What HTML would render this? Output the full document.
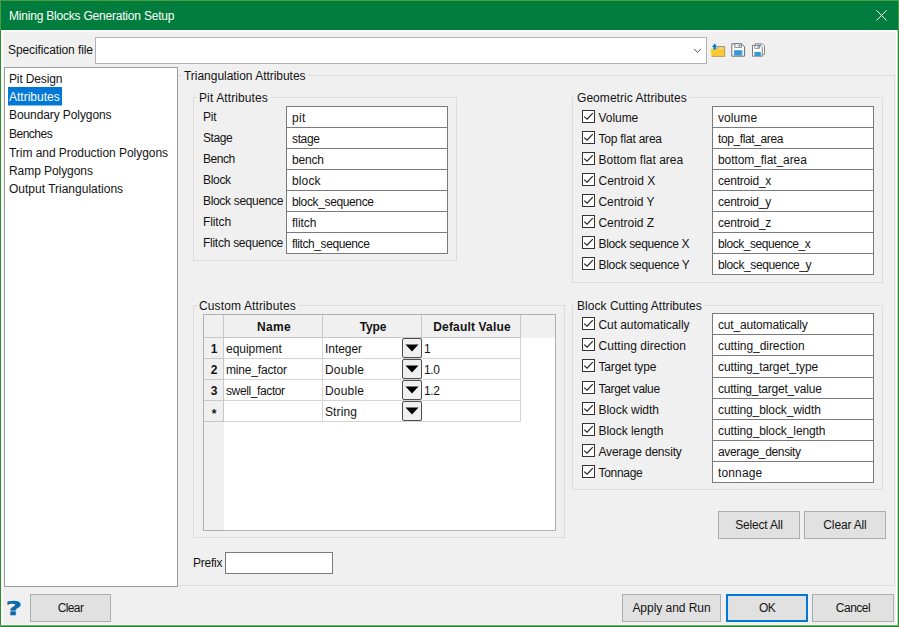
<!DOCTYPE html><html><head><meta charset="utf-8"><title>Mining Blocks Generation Setup</title><style>
*{box-sizing:border-box;margin:0;padding:0}
html,body{width:899px;height:627px;overflow:hidden;background:#f0f0f0}
body{font-family:"Liberation Sans",sans-serif;font-size:12px;color:#141414;position:relative}
.a{position:absolute}
.t{position:absolute;white-space:nowrap;line-height:16px;height:16px}
.gb{position:absolute;border:1px solid #dcdcdc}
.gl{position:absolute;white-space:nowrap;line-height:16px;height:16px;background:#f0f0f0;padding:0 2px}
.in{position:absolute;border:1px solid #7a7a7a;background:#fff;height:22px;width:162px;line-height:22px;padding-left:5px;white-space:nowrap}
.cb{position:absolute;width:13px;height:13px;border:1px solid #333;background:#fff}
.cb svg{position:absolute;left:0;top:0}
.btn{position:absolute;border:1px solid #adadad;background:#e1e1e1;text-align:center;line-height:27px;height:28px;white-space:nowrap}
.li{position:absolute;left:8px;white-space:nowrap;line-height:18px;height:18px;padding:0 1px}
.hc{position:absolute;background:#f0f0f0;border-right:1px solid #c8c8c8;border-bottom:1px solid #c8c8c8;font-weight:bold;text-align:center;white-space:nowrap}
.c{position:absolute;background:#fff;border-right:1px solid #d4d4d4;border-bottom:1px solid #d4d4d4;white-space:nowrap;line-height:22px;padding-left:2px}
.dd{position:absolute;width:20px;height:20px;border:1px solid #4d4d4d;border-radius:2px;background:#f0f0f0}
</style></head><body>
<div class="a" style="left:0;top:0;width:899px;height:30px;background:#007c3c"></div>
<div class="a" style="left:0;top:0;width:899px;height:1px;background:#4a9e3f"></div>
<div class="a" style="left:0;top:0;width:1px;height:30px;background:#4a9e3f"></div>
<div class="a" style="left:898px;top:0;width:1px;height:30px;background:#4a9e3f"></div>
<div class="a" style="left:0;top:30px;width:1px;height:597px;background:#2d8c2d"></div>
<div class="a" style="left:898px;top:30px;width:1px;height:597px;background:#2d8c2d"></div>
<div class="a" style="left:0;top:625px;width:899px;height:2px;background:#2d8c2d"></div>
<div class="a" style="left:1px;top:30px;width:897px;height:2px;background:#fdfafc"></div>
<div class="a" style="left:1px;top:30px;width:2px;height:595px;background:#fdfafc"></div>
<div class="a" style="left:896px;top:30px;width:2px;height:595px;background:#fdfafc"></div>
<div class="a" style="left:1px;top:624px;width:897px;height:1px;background:#fdfafc"></div>
<div class="a" style="left:897px;top:30px;width:1px;height:595px;background:#bfd9be"></div>
<div class="a" style="left:0;top:625px;width:899px;height:1px;background:#6bad6b"></div>
<div class="t" style="left:9px;top:8px;color:#fff"><span style="letter-spacing:-0.207px">Mining Blocks Generation Setup</span></div>
<svg class="a" style="left:876px;top:10px" width="12" height="12" viewBox="0 0 12 12"><path d="M0.4 0.3L10.6 10.5M10.6 0.3L0.4 10.5" stroke="#fff" stroke-width="1" fill="none"/></svg>
<div class="t" style="left:8px;top:42px"><span style="letter-spacing:-0.104px">Specification file</span></div>
<div class="a" style="left:95px;top:37px;width:612px;height:27px;border:1px solid #b2b2b2;background:#fff"></div>
<svg class="a" style="left:693px;top:48px" width="9" height="6" viewBox="0 0 9 6"><path d="M1.1 1L4.5 4.3L7.9 1" stroke="#505050" stroke-width="1" fill="none"/></svg>
<svg class="a" style="left:706px;top:38px" width="64" height="24" viewBox="706 38 64 24"><path d="M717.2 48.9L718 46.6H724.6V49" fill="#e9d9a0" stroke="#8a7a50" stroke-width="0.8"/><path d="M710.6 48.8H724.7V56.4H711.6Z" fill="#fcc934"/><path d="M711.6 56.4H724.7V48.8" fill="none" stroke="#9a8440" stroke-width="0.7"/><path d="M714.7 43.6L717.5 46.9H716V49.6H713.4V46.9H711.9Z" fill="#0f7fc8"/><path d="M731.8 43.8H741.5L744.6 47V56.2H731.8Z" fill="#fff" stroke="#6e6e6e" stroke-width="1"/><rect x="734.8" y="43.8" width="6.6" height="3.5" fill="#f4f4f4" stroke="#6e6e6e" stroke-width="0.8"/><rect x="738.7" y="44.8" width="1.5" height="1.5" fill="#1c86cc"/><rect x="733.9" y="50.1" width="8.5" height="5.7" fill="#3a97d0"/><rect x="734.5" y="50.7" width="7.3" height="4.5" fill="none" stroke="#6fb5e0" stroke-width="0.5"/><path d="M755.4 43.8H762.4L764.5 46V54.4H755.4Z" fill="#fff" stroke="#7a7a7a" stroke-width="0.9"/><rect x="759.9" y="44.5" width="1.3" height="1.3" fill="#1c86cc"/><path d="M752.5 45.3H760L762.3 47.6V56.2H752.5Z" fill="#fff" stroke="#6e6e6e" stroke-width="0.9"/><rect x="754.8" y="45.3" width="4.8" height="3" fill="#f4f4f4" stroke="#6e6e6e" stroke-width="0.7"/><rect x="757.6" y="46.3" width="1.3" height="1.3" fill="#1c86cc"/><rect x="754.4" y="51.9" width="6.4" height="4.1" fill="#3a97d0"/></svg>
<div class="gb" style="left:176px;top:75px;width:719px;height:511px"></div>
<div class="gl" style="left:182px;top:68px"><span style="letter-spacing:-0.032px">Triangulation Attributes</span></div>
<div class="gb" style="left:193px;top:97px;width:264px;height:164px"></div>
<div class="gl" style="left:197px;top:90px"><span style="letter-spacing:0.115px">Pit Attributes</span></div>
<div class="gb" style="left:572px;top:97px;width:311px;height:186px"></div>
<div class="gl" style="left:575px;top:90px"><span style="letter-spacing:0.053px">Geometric Attributes</span></div>
<div class="gb" style="left:193px;top:305px;width:372px;height:233px"></div>
<div class="gl" style="left:197px;top:298px"><span style="letter-spacing:0.125px">Custom Attributes</span></div>
<div class="gb" style="left:572px;top:305px;width:311px;height:185px"></div>
<div class="gl" style="left:575px;top:298px"><span style="letter-spacing:0.033px">Block Cutting Attributes</span></div>
<div class="a" style="left:4px;top:67px;width:174px;height:520px;border:1px solid #9a9da4;background:#fff"></div>
<div class="a" style="left:8px;top:87px;width:54px;height:18px;background:#0078d7"></div>
<div class="a" style="left:8px;top:105px;width:54px;height:1px;background:#80bbeb"></div>
<div class="li" style="top:70px"><span style="letter-spacing:-0.138px">Pit Design</span></div>
<div class="li" style="top:88px;color:#fff">Attributes</div>
<div class="li" style="top:106px"><span style="letter-spacing:-0.094px">Boundary Polygons</span></div>
<div class="li" style="top:125px"><span style="letter-spacing:-0.5px">Benches</span></div>
<div class="li" style="top:144px"><span style="letter-spacing:-0.047px">Trim and Production Polygons</span></div>
<div class="li" style="top:162px"><span style="letter-spacing:-0.063px">Ramp Polygons</span></div>
<div class="li" style="top:180px">Output Triangulations</div>
<div class="t" style="left:203px;top:109px"><span style="letter-spacing:-0.25px">Pit</span></div>
<div class="in" style="left:286px;top:106px"><span style="letter-spacing:0.35px">pit</span></div>
<div class="t" style="left:203px;top:130px"><span style="letter-spacing:-0.436px">Stage</span></div>
<div class="in" style="left:286px;top:127px"><span style="letter-spacing:-0.375px">stage</span></div>
<div class="t" style="left:203px;top:151px"><span style="letter-spacing:-0.436px">Bench</span></div>
<div class="in" style="left:286px;top:148px"><span style="letter-spacing:-0.186px">bench</span></div>
<div class="t" style="left:203px;top:172px"><span style="letter-spacing:-0.314px">Block</span></div>
<div class="in" style="left:286px;top:169px"><span style="letter-spacing:0.125px">block</span></div>
<div class="t" style="left:203px;top:193px"><span style="letter-spacing:-0.327px">Block sequence</span></div>
<div class="in" style="left:286px;top:190px"><span style="letter-spacing:-0.365px">block_sequence</span></div>
<div class="t" style="left:203px;top:214px"><span style="letter-spacing:-0.1px">Flitch</span></div>
<div class="in" style="left:286px;top:211px"><span style="letter-spacing:-0.05px">flitch</span></div>
<div class="t" style="left:203px;top:235px"><span style="letter-spacing:-0.268px">Flitch sequence</span></div>
<div class="in" style="left:286px;top:232px"><span style="letter-spacing:-0.393px">flitch_sequence</span></div>
<div class="cb" style="left:582px;top:110px"><svg width="11" height="11" viewBox="0 0 11 11"><path d="M1.2 5.6L4.1 8.1L9.8 2.2" stroke="#222" stroke-width="1.2" fill="none"/></svg></div>
<div class="t" style="left:598.5px;top:110px"><span style="letter-spacing:-0.05px">Volume</span></div>
<div class="in" style="left:712px;top:106px;height:22px"><span style="letter-spacing:0.08px">volume</span></div>
<div class="cb" style="left:582px;top:131px"><svg width="11" height="11" viewBox="0 0 11 11"><path d="M1.2 5.6L4.1 8.1L9.8 2.2" stroke="#222" stroke-width="1.2" fill="none"/></svg></div>
<div class="t" style="left:598.5px;top:131px"><span style="letter-spacing:-0.208px">Top flat area</span></div>
<div class="in" style="left:712px;top:127px;height:22px"><span style="letter-spacing:-0.384px">top_flat_area</span></div>
<div class="cb" style="left:582px;top:152px"><svg width="11" height="11" viewBox="0 0 11 11"><path d="M1.2 5.6L4.1 8.1L9.8 2.2" stroke="#222" stroke-width="1.2" fill="none"/></svg></div>
<div class="t" style="left:598.5px;top:152px">Bottom flat area</div>
<div class="in" style="left:712px;top:148px;height:22px"><span style="letter-spacing:-0.08px">bottom_flat_area</span></div>
<div class="cb" style="left:582px;top:173px"><svg width="11" height="11" viewBox="0 0 11 11"><path d="M1.2 5.6L4.1 8.1L9.8 2.2" stroke="#222" stroke-width="1.2" fill="none"/></svg></div>
<div class="t" style="left:598.5px;top:173px">Centroid X</div>
<div class="in" style="left:712px;top:169px;height:22px"><span style="letter-spacing:-0.222px">centroid_x</span></div>
<div class="cb" style="left:582px;top:194px"><svg width="11" height="11" viewBox="0 0 11 11"><path d="M1.2 5.6L4.1 8.1L9.8 2.2" stroke="#222" stroke-width="1.2" fill="none"/></svg></div>
<div class="t" style="left:598.5px;top:194px"><span style="letter-spacing:-0.056px">Centroid Y</span></div>
<div class="in" style="left:712px;top:190px;height:22px"><span style="letter-spacing:-0.244px">centroid_y</span></div>
<div class="cb" style="left:582px;top:215px"><svg width="11" height="11" viewBox="0 0 11 11"><path d="M1.2 5.6L4.1 8.1L9.8 2.2" stroke="#222" stroke-width="1.2" fill="none"/></svg></div>
<div class="t" style="left:598.5px;top:215px"><span style="letter-spacing:-0.056px">Centroid Z</span></div>
<div class="in" style="left:712px;top:211px;height:22px"><span style="letter-spacing:-0.222px">centroid_z</span></div>
<div class="cb" style="left:582px;top:236px"><svg width="11" height="11" viewBox="0 0 11 11"><path d="M1.2 5.6L4.1 8.1L9.8 2.2" stroke="#222" stroke-width="1.2" fill="none"/></svg></div>
<div class="t" style="left:598.5px;top:236px"><span style="letter-spacing:-0.333px">Block sequence X</span></div>
<div class="in" style="left:712px;top:232px;height:22px"><span style="letter-spacing:-0.439px">block_sequence_x</span></div>
<div class="cb" style="left:582px;top:257px"><svg width="11" height="11" viewBox="0 0 11 11"><path d="M1.2 5.6L4.1 8.1L9.8 2.2" stroke="#222" stroke-width="1.2" fill="none"/></svg></div>
<div class="t" style="left:598.5px;top:257px"><span style="letter-spacing:-0.3px">Block sequence Y</span></div>
<div class="in" style="left:712px;top:253px;height:22px"><span style="letter-spacing:-0.386px">block_sequence_y</span></div>
<div class="cb" style="left:582px;top:317px"><svg width="11" height="11" viewBox="0 0 11 11"><path d="M1.2 5.6L4.1 8.1L9.8 2.2" stroke="#222" stroke-width="1.2" fill="none"/></svg></div>
<div class="t" style="left:598.5px;top:317px"><span style="letter-spacing:-0.062px">Cut automatically</span></div>
<div class="in" style="left:712px;top:313px;height:22px"><span style="letter-spacing:-0.181px">cut_automatically</span></div>
<div class="cb" style="left:582px;top:338px"><svg width="11" height="11" viewBox="0 0 11 11"><path d="M1.2 5.6L4.1 8.1L9.8 2.2" stroke="#222" stroke-width="1.2" fill="none"/></svg></div>
<div class="t" style="left:598.5px;top:338px"><span style="letter-spacing:0.047px">Cutting direction</span></div>
<div class="in" style="left:712px;top:334px;height:22px"><span style="letter-spacing:-0.049px">cutting_direction</span></div>
<div class="cb" style="left:582px;top:359px"><svg width="11" height="11" viewBox="0 0 11 11"><path d="M1.2 5.6L4.1 8.1L9.8 2.2" stroke="#222" stroke-width="1.2" fill="none"/></svg></div>
<div class="t" style="left:598.5px;top:359px"><span style="letter-spacing:-0.15px">Target type</span></div>
<div class="in" style="left:712px;top:355px;height:23px"><span style="letter-spacing:-0.106px">cutting_target_type</span></div>
<div class="cb" style="left:582px;top:381px"><svg width="11" height="11" viewBox="0 0 11 11"><path d="M1.2 5.6L4.1 8.1L9.8 2.2" stroke="#222" stroke-width="1.2" fill="none"/></svg></div>
<div class="t" style="left:598.5px;top:381px"><span style="letter-spacing:-0.341px">Target value</span></div>
<div class="in" style="left:712px;top:377px;height:22px"><span style="letter-spacing:-0.221px">cutting_target_value</span></div>
<div class="cb" style="left:582px;top:402px"><svg width="11" height="11" viewBox="0 0 11 11"><path d="M1.2 5.6L4.1 8.1L9.8 2.2" stroke="#222" stroke-width="1.2" fill="none"/></svg></div>
<div class="t" style="left:598.5px;top:402px"><span style="letter-spacing:-0.025px">Block width</span></div>
<div class="in" style="left:712px;top:398px;height:22px"><span style="letter-spacing:-0.106px">cutting_block_width</span></div>
<div class="cb" style="left:582px;top:423px"><svg width="11" height="11" viewBox="0 0 11 11"><path d="M1.2 5.6L4.1 8.1L9.8 2.2" stroke="#222" stroke-width="1.2" fill="none"/></svg></div>
<div class="t" style="left:598.5px;top:423px"><span style="letter-spacing:-0.045px">Block length</span></div>
<div class="in" style="left:712px;top:419px;height:22px"><span style="letter-spacing:-0.1px">cutting_block_length</span></div>
<div class="cb" style="left:582px;top:444px"><svg width="11" height="11" viewBox="0 0 11 11"><path d="M1.2 5.6L4.1 8.1L9.8 2.2" stroke="#222" stroke-width="1.2" fill="none"/></svg></div>
<div class="t" style="left:598.5px;top:444px"><span style="letter-spacing:-0.179px">Average density</span></div>
<div class="in" style="left:712px;top:440px;height:22px"><span style="letter-spacing:-0.357px">average_density</span></div>
<div class="cb" style="left:582px;top:465px"><svg width="11" height="11" viewBox="0 0 11 11"><path d="M1.2 5.6L4.1 8.1L9.8 2.2" stroke="#222" stroke-width="1.2" fill="none"/></svg></div>
<div class="t" style="left:598.5px;top:465px"><span style="letter-spacing:-0.292px">Tonnage</span></div>
<div class="in" style="left:712px;top:461px;height:22px"><span style="letter-spacing:0.133px">tonnage</span></div>
<div class="a" style="left:203px;top:314px;width:353px;height:217px;border:1px solid #b0b0b0;background:#fff"></div>
<div class="a" style="left:204px;top:315px;width:351px;height:23px;background:#f0f0f0"></div>
<div class="a" style="left:204px;top:315px;width:20px;height:215px;background:#f0f0f0"></div>
<div class="hc" style="left:204px;top:315px;width:20px;height:23px;line-height:25px;padding-left:2px"></div>
<div class="hc" style="left:224px;top:315px;width:99px;height:23px;line-height:25px;padding-left:2px"><span style="letter-spacing:0.333px">Name</span></div>
<div class="hc" style="left:323px;top:315px;width:99px;height:23px;line-height:25px;padding-left:2px"><span style="letter-spacing:-0.167px">Type</span></div>
<div class="hc" style="left:422px;top:315px;width:99px;height:23px;line-height:25px;padding-left:2px"><span style="letter-spacing:0.167px">Default Value</span></div>
<div class="hc" style="left:204px;top:338px;width:20px;height:21px;line-height:22px;padding-left:1px">1</div>
<div class="c" style="left:224px;top:338px;width:99px;height:21px"><span style="letter-spacing:-0.032px">equipment</span></div>
<div class="c" style="left:323px;top:338px;width:99px;height:21px"><span style="letter-spacing:-0.041px">Integer</span></div>
<div class="c" style="left:422px;top:338px;width:99px;height:21px">1</div>
<div class="dd" style="left:402px;top:338px"><svg class="a" style="left:2px;top:5px" width="14" height="8" viewBox="0 0 14 8"><path d="M0.5 0.5H13.5L7 7.5Z" fill="#000"/></svg></div>
<div class="hc" style="left:204px;top:359px;width:20px;height:21px;line-height:22px;padding-left:1px">2</div>
<div class="c" style="left:224px;top:359px;width:99px;height:21px"><span style="letter-spacing:-0.175px">mine_factor</span></div>
<div class="c" style="left:323px;top:359px;width:99px;height:21px"><span style="letter-spacing:0.2px">Double</span></div>
<div class="c" style="left:422px;top:359px;width:99px;height:21px"><span style="letter-spacing:-0.375px">1.0</span></div>
<div class="dd" style="left:402px;top:359px"><svg class="a" style="left:2px;top:5px" width="14" height="8" viewBox="0 0 14 8"><path d="M0.5 0.5H13.5L7 7.5Z" fill="#000"/></svg></div>
<div class="hc" style="left:204px;top:380px;width:20px;height:21px;line-height:22px;padding-left:1px">3</div>
<div class="c" style="left:224px;top:380px;width:99px;height:21px"><span style="letter-spacing:-0.386px">swell_factor</span></div>
<div class="c" style="left:323px;top:380px;width:99px;height:21px"><span style="letter-spacing:0.2px">Double</span></div>
<div class="c" style="left:422px;top:380px;width:99px;height:21px"><span style="letter-spacing:-0.375px">1.2</span></div>
<div class="dd" style="left:402px;top:380px"><svg class="a" style="left:2px;top:5px" width="14" height="8" viewBox="0 0 14 8"><path d="M0.5 0.5H13.5L7 7.5Z" fill="#000"/></svg></div>
<div class="hc" style="left:204px;top:401px;width:20px;height:21px;line-height:26px;padding-left:1px">*</div>
<div class="c" style="left:224px;top:401px;width:99px;height:21px"></div>
<div class="c" style="left:323px;top:401px;width:99px;height:21px"><span style="letter-spacing:0.1px">String</span></div>
<div class="c" style="left:422px;top:401px;width:99px;height:21px"></div>
<div class="dd" style="left:402px;top:401px"><svg class="a" style="left:2px;top:5px" width="14" height="8" viewBox="0 0 14 8"><path d="M0.5 0.5H13.5L7 7.5Z" fill="#000"/></svg></div>
<div class="t" style="left:193px;top:555px"><span style="letter-spacing:-0.25px">Prefix</span></div>
<div class="in" style="left:225px;top:552px;width:108px"></div>
<div class="btn" style="left:718px;top:511px;width:82px"><span style="letter-spacing:-0.167px">Select All</span></div>
<div class="btn" style="left:804px;top:511px;width:82px"><span style="letter-spacing:-0.157px">Clear All</span></div>
<div class="btn" style="left:30px;top:594px;width:81px"><span style="letter-spacing:-0.6px">Clear</span></div>
<div class="btn" style="left:622px;top:594px;width:99px"><span style="letter-spacing:-0.042px">Apply and Run</span></div>
<div class="btn" style="left:726px;top:594px;width:82px;border:2px solid #0078d7;line-height:25px"><span style="letter-spacing:-0.6px">OK</span></div>
<div class="btn" style="left:812px;top:594px;width:82px"><span style="letter-spacing:-0.5px">Cancel</span></div>
<div class="a" style="left:3.6px;top:596px;width:20px;height:24px;line-height:24px;font-family:'DejaVu Sans',sans-serif;font-size:20px;font-weight:bold;color:#0a69a9;text-align:center;transform:scaleX(1.4);-webkit-text-stroke:0.4px #0a69a9">?</div>
</body></html>
